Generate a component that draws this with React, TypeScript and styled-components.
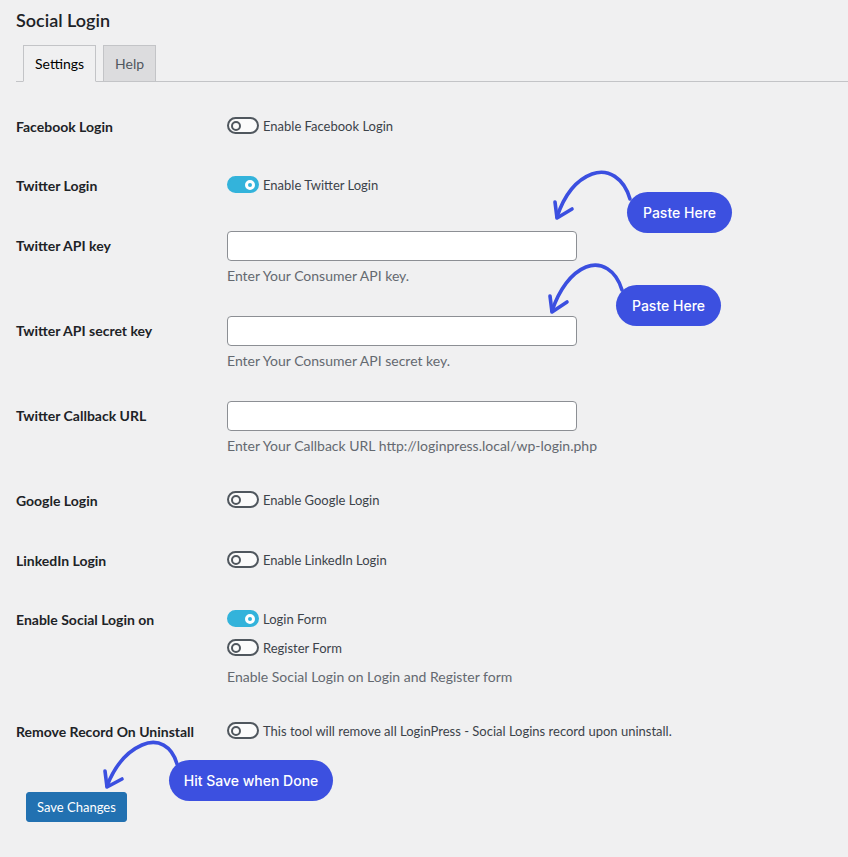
import React from "react";
import styled, { createGlobalStyle } from "styled-components";

const GlobalStyle = createGlobalStyle`
  html, body {
    margin: 0;
    padding: 0;
    background: #f0f0f1;
  }
  body {
    font-family: Lato, "Noto Sans", "Liberation Sans", sans-serif;
    color: #3c434a;
    font-size: 13px;
  }
  * { box-sizing: border-box; }
`;

const Page = styled.div`
  position: relative;
  width: 848px;
  min-height: 857px;
  padding: 8px 0 0 16px;
`;

const Title = styled.h2`
  margin: 0;
  font-size: 18px;
  line-height: 24px;
  font-weight: 600;
  color: #1d2327;
`;

const TabBar = styled.div`
  display: flex;
  align-items: flex-end;
  gap: 7px;
  margin-top: 13px;
  padding-left: 7px;
  border-bottom: 1px solid #c3c4c7;
`;

const Tab = styled.div<{ $active?: boolean }>`
  height: 37px;
  margin-bottom: -1px;
  padding: 0 11px;
  display: flex;
  align-items: center;
  font-size: 14px;
  font-weight: 400;
  border: 1px solid #c3c4c7;
  border-bottom-color: ${(p) => (p.$active ? "#f0f0f1" : "#c3c4c7")};
  background: ${(p) => (p.$active ? "#f0f0f1" : "#dcdcde")};
  color: ${(p) => (p.$active ? "#000" : "#50575e")};
`;

const Form = styled.div`
  margin-top: 16px;
  display: flex;
  flex-direction: column;
`;

const Row = styled.div`
  display: grid;
  grid-template-columns: 211px 1fr;
`;

const Label = styled.div<{ $bottom?: number }>`
  padding: 20px 0 ${(p) => p.$bottom ?? 21}px;
  font-size: 14px;
  line-height: 18px;
  font-weight: 700;
  color: #1d2327;
`;

const Field = styled.div<{ $top?: number; $bottom?: number }>`
  padding-top: ${(p) => p.$top ?? 19}px;
  padding-bottom: ${(p) => p.$bottom ?? 15}px;
  display: flex;
  flex-direction: column;
  align-items: flex-start;
`;

const ToggleLine = styled.label<{ $gap?: number }>`
  display: flex;
  align-items: center;
  gap: 4px;
  height: 17px;
  margin-top: ${(p) => p.$gap ?? 0}px;
  font-size: 13px;
  color: #3c434a;
`;

const Track = styled.span<{ $on?: boolean }>`
  position: relative;
  flex: none;
  width: 32px;
  height: 17px;
  border-radius: 9px;
  border: 2px solid ${(p) => (p.$on ? "#33b3db" : "#50575e")};
  background: ${(p) => (p.$on ? "#33b3db" : "#fbfbfb")};
`;

const Knob = styled.span<{ $on?: boolean }>`
  position: absolute;
  top: 1.5px;
  left: ${(p) => (p.$on ? "16px" : "2px")};
  width: 10px;
  height: 10px;
  border-radius: 50%;
  border: ${(p) => (p.$on ? "3px solid #fff" : "2.5px solid #50575e")};
  background: ${(p) => (p.$on ? "#33b3db" : "#fbfbfb")};
`;

const TextInput = styled.input`
  width: 350px;
  height: 30px;
  margin: 0;
  padding: 0 8px;
  border: 1px solid #8c8f94;
  border-radius: 4px;
  background: #fff;
  font-family: inherit;
  font-size: 14px;
`;

const Description = styled.p<{ $mt?: number }>`
  margin: ${(p) => p.$mt ?? 5}px 0 0;
  font-size: 14px;
  line-height: 20px;
  color: #646970;
`;

const SaveButton = styled.button`
  margin: 30px 0 0 10px;
  height: 30px;
  padding: 0 10px;
  border: 1px solid #2271b1;
  border-radius: 3px;
  background: #2271b1;
  color: #fff;
  font-family: inherit;
  font-size: 13px;
  cursor: pointer;
`;

const Overlay = styled.svg`
  position: absolute;
  left: 0;
  top: 0;
  pointer-events: none;
`;

const Pill = styled.div<{ $x: number; $y: number; $w: number }>`
  position: absolute;
  left: ${(p) => p.$x}px;
  top: ${(p) => p.$y}px;
  width: ${(p) => p.$w}px;
  height: 41px;
  border-radius: 21px;
  background: #3c50e0;
  color: #fff;
  display: flex;
  align-items: center;
  justify-content: center;
  font-family: Inter, "Noto Sans", sans-serif;
  font-size: 14px;
  font-weight: 500;
`;

function Toggle({ on, label, gap }: { on?: boolean; label: string; gap?: number }) {
  return (
    <ToggleLine $gap={gap}>
      <Track $on={on}>
        <Knob $on={on} />
      </Track>
      {label}
    </ToggleLine>
  );
}

export default function App() {
  return (
    <Page>
      <GlobalStyle />
      <Title>Social Login</Title>
      <TabBar>
        <Tab $active>Settings</Tab>
        <Tab>Help</Tab>
      </TabBar>
      <Form>
        <Row>
          <Label>Facebook Login</Label>
          <Field>
            <Toggle label="Enable Facebook Login" />
          </Field>
        </Row>
        <Row>
          <Label $bottom={22}>Twitter Login</Label>
          <Field>
            <Toggle on label="Enable Twitter Login" />
          </Field>
        </Row>
        <Row>
          <Label>Twitter API key</Label>
          <Field $top={14} $bottom={16}>
            <TextInput type="text" />
            <Description>Enter Your Consumer API key.</Description>
          </Field>
        </Row>
        <Row>
          <Label>Twitter API secret key</Label>
          <Field $top={14} $bottom={16}>
            <TextInput type="text" />
            <Description>Enter Your Consumer API secret key.</Description>
          </Field>
        </Row>
        <Row>
          <Label>Twitter Callback URL</Label>
          <Field $top={14} $bottom={16}>
            <TextInput type="text" />
            <Description>Enter Your Callback URL http://loginpress.local/wp-login.php</Description>
          </Field>
        </Row>
        <Row>
          <Label $bottom={22}>Google Login</Label>
          <Field>
            <Toggle label="Enable Google Login" />
          </Field>
        </Row>
        <Row>
          <Label>LinkedIn Login</Label>
          <Field>
            <Toggle label="Enable LinkedIn Login" />
          </Field>
        </Row>
        <Row>
          <Label>Enable Social Login on</Label>
          <Field $bottom={16}>
            <Toggle on label="Login Form" />
            <Toggle label="Register Form" gap={12} />
            <Description $mt={11}>Enable Social Login on Login and Register form</Description>
          </Field>
        </Row>
        <Row>
          <Label>Remove Record On Uninstall</Label>
          <Field>
            <Toggle label="This tool will remove all LoginPress - Social Logins record upon uninstall." />
          </Field>
        </Row>
      </Form>
      <SaveButton>Save Changes</SaveButton>

      <Overlay width="848" height="857" viewBox="0 0 848 857">
        <g fill="none" stroke="#3b4fe0" strokeWidth="3.6" strokeLinecap="round" strokeLinejoin="round">
          <path d="M630 199 C624 178 608 168 592 174 C576 180 564 196 557 217" />
          <path d="M555 202 L557 218 L572 209" />
          <path d="M622 290 C616 270 601 261 586 267 C571 273 559 290 552 311" />
          <path d="M550 296 L552 312 L567 302" />
          <path d="M177 764 C172 746 158 738 142 745 C126 752 114 768 107 786" />
          <path d="M105 771 L107 787 L122 779" />
        </g>
      </Overlay>
      <Pill $x={627} $y={192} $w={105}>Paste Here</Pill>
      <Pill $x={616} $y={285} $w={105}>Paste Here</Pill>
      <Pill $x={169} $y={760} $w={164}>Hit Save when Done</Pill>
    </Page>
  );
}
